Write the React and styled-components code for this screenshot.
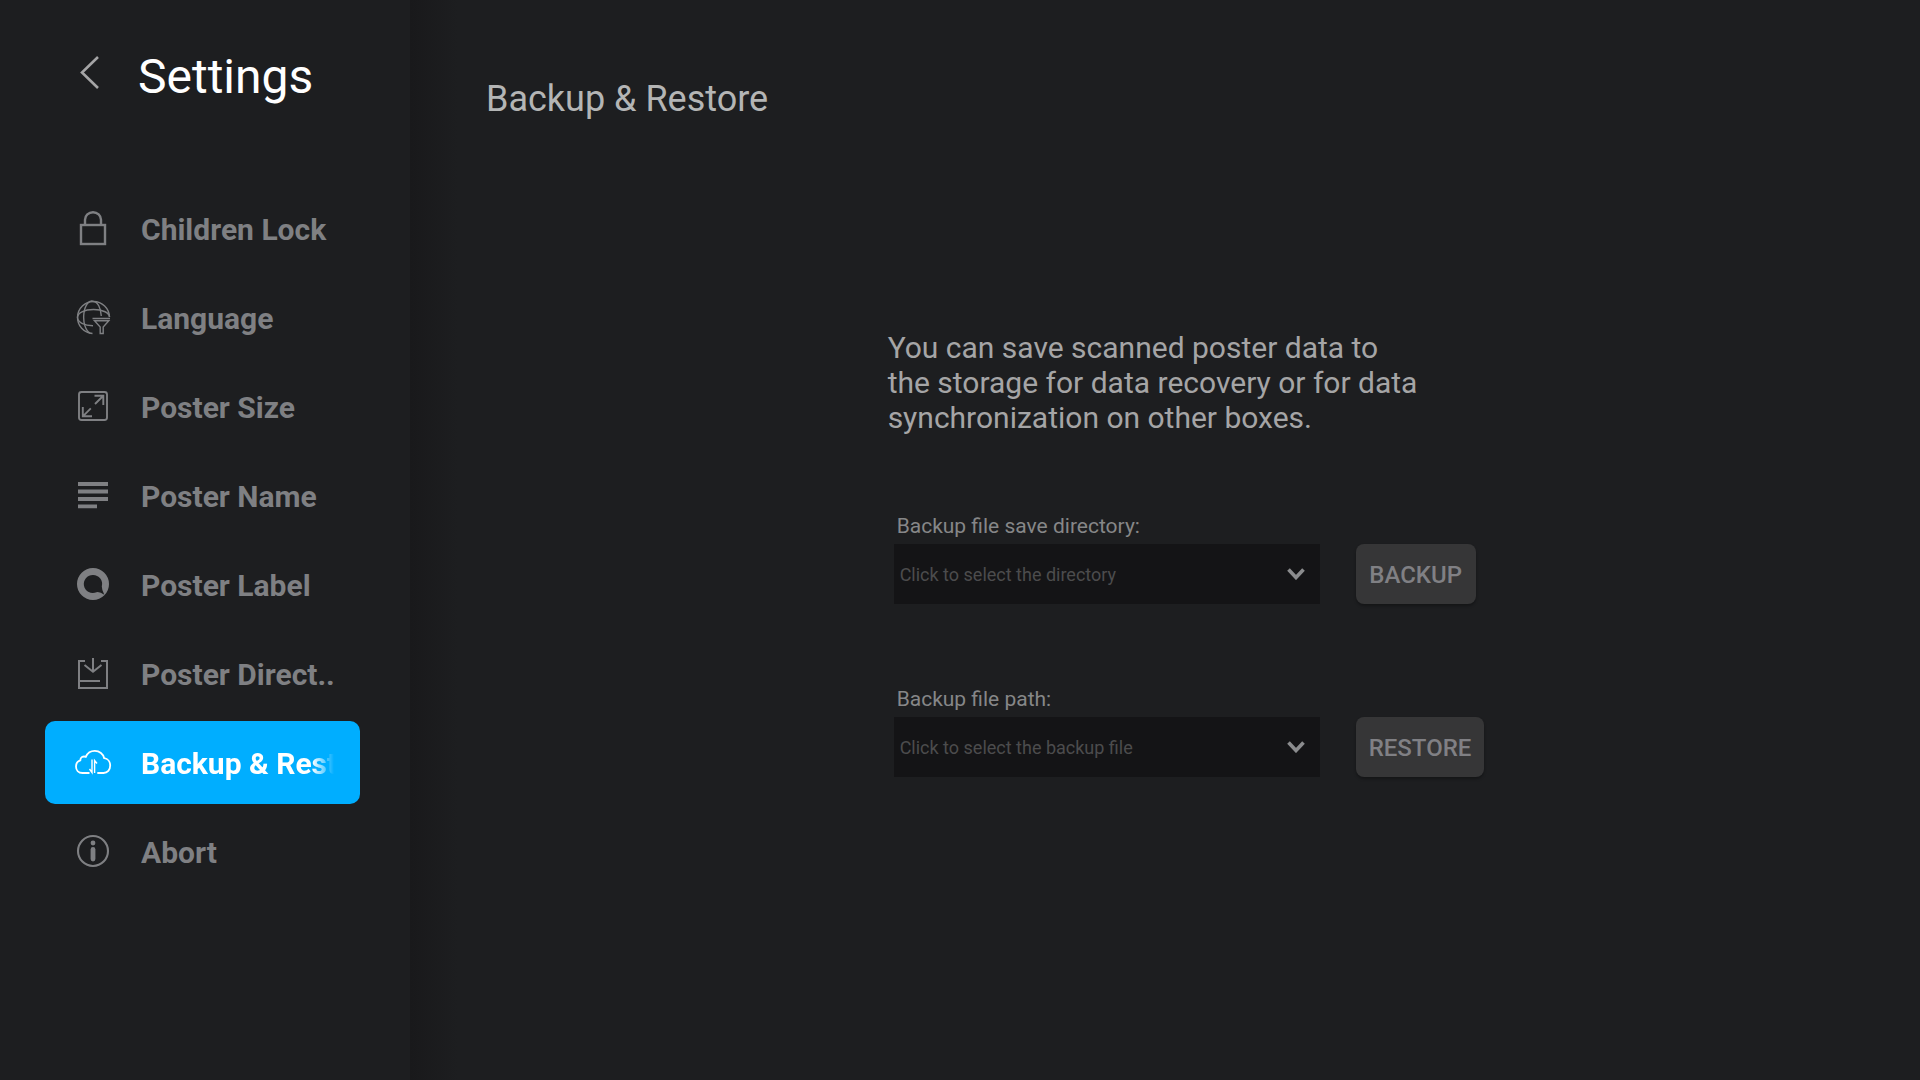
import React, { useState } from "react"
import styled, { createGlobalStyle, css } from "styled-components"

const LockIcon = () => (
  <Icon>
    <rect x="5" y="14" width="24" height="19" strokeWidth="2.4" />
    <path d="M9 14V8.8a8 7.6 0 0 1 16 0V14" strokeWidth="2.4" />
  </Icon>
)

const LanguageIcon = () => (
  <Icon strokeWidth="1.4">
    <path d="M16.5 33.5A16 16 0 1 1 33.5 17" />
    <path d="M14 33A8 16 0 0 1 17.5 1.5A8 16 0 0 1 25.3 16" />
    <path d="M17 25.7C8 25.7 1.5 22 1.5 17.5C1.5 13 8 9.5 17.5 9.5S33.5 13 33.5 17" />
    <path d="M16.5 18.5H34M18.5 20.8H32.8L27.2 27V33.5H24.2V27Z" />
  </Icon>
)

const SizeIcon = () => (
  <Icon strokeWidth="1.9">
    <rect x="3" y="3" width="28" height="28" rx="2.5" />
    <path d="M18.5 6.8H27.3V16M27.3 6.8L19 15" />
    <path d="M6.8 18V27.3H16M6.8 27.3L14.8 19.3" />
  </Icon>
)

const NameIcon = () => (
  <Icon>
    <path d="M2 6H32M2 13.5H32M2 21H32M2 28.3H21" strokeWidth="3.8" />
  </Icon>
)

const LabelIcon = () => (
  <Icon>
    <path
      d="M17 1A16 16 0 1 0 17 33A16 16 0 1 0 17 1ZM17 8A9 9 0 0 1 25.8 19.5Q25.8 23 28.3 27.8Q24 24.6 20.5 25.2A9 9 0 1 1 17 8Z"
      fill="currentColor"
      fillRule="evenodd"
      stroke="none"
    />
  </Icon>
)

const DirectoryIcon = () => (
  <Icon strokeWidth="2">
    <path d="M9 5H3V32H31V5H25" />
    <path d="M17 2V15.5M8.5 9L17 15.8L25.5 9M3 25H24" />
  </Icon>
)

const CloudIcon = () => (
  <Icon strokeWidth="1.8">
    <path d="M13.5 28H6.5C2.3 28 0 25 0 21.5C0 18.3 2 16 4.3 15.3C4.3 12.3 7 10.8 9.8 11.8C11.5 8 15 5.9 18.8 5.9C23.5 5.9 27.3 9 28.2 13.2C32 13.7 34.2 17 34.2 20.5C34.2 24.8 31.5 28 27.5 28H21.3" />
    <path d="M16 14.5V27.5L13.5 24M18.6 28V15.5L21 18.5" strokeWidth="1.4" />
  </Icon>
)

const InfoIcon = () => (
  <Icon>
    <circle cx="17" cy="17" r="15" strokeWidth="2.1" />
    <circle cx="17" cy="9" r="2.4" fill="currentColor" stroke="none" />
    <path d="M17 15.5V25" strokeWidth="4.8" strokeLinecap="round" />
  </Icon>
)

const menus = [
  { id: "lock", name: "Children Lock", icon: <LockIcon /> },
  { id: "language", name: "Language", icon: <LanguageIcon /> },
  { id: "size", name: "Poster Size", icon: <SizeIcon /> },
  { id: "name", name: "Poster Name", icon: <NameIcon /> },
  { id: "label", name: "Poster Label", icon: <LabelIcon /> },
  { id: "directory", name: "Poster Direct..", icon: <DirectoryIcon /> },
  { id: "backup", name: "Backup & Restore", icon: <CloudIcon /> },
  { id: "abort", name: "Abort", icon: <InfoIcon /> },
]

const Field = ({ id, label, placeholder, action }) => (
  <FieldView>
    <Label htmlFor={id}>{label}</Label>
    <FieldRow>
      <SelectView>
        <Select id={id} defaultValue="">
          <option value="">{placeholder}</option>
        </Select>
        <Chevron viewBox="0 0 18 12" aria-hidden="true">
          <path d="M1.5 1.5L9 9.5L16.5 1.5" />
        </Chevron>
      </SelectView>
      <ActionButton type="button">{action}</ActionButton>
    </FieldRow>
  </FieldView>
)

const App = () => {
  const [selected, setSelected] = useState("backup")

  return (
    <Container>
      <GlobalStyle />
      <Sidebar>
        <Header>
          <BackButton type="button" aria-label="Back">
            <BackArrow viewBox="0 0 20 40" aria-hidden="true">
              <path d="M18 1L2 16.5L18 32" />
            </BackArrow>
          </BackButton>
          <Title>Settings</Title>
        </Header>
        <Menu>
          {menus.map((menu) => (
            <MenuItem
              key={menu.id}
              type="button"
              $active={menu.id === selected}
              onClick={() => setSelected(menu.id)}
            >
              {menu.icon}
              <MenuText $active={menu.id === selected}>{menu.name}</MenuText>
            </MenuItem>
          ))}
        </Menu>
      </Sidebar>
      <Main>
        <PageTitle>Backup &amp; Restore</PageTitle>
        <Content>
          <Description>
            You can save scanned poster data to the storage for data recovery or for data
            synchronization on other boxes.
          </Description>
          <Field
            id="save-directory"
            label="Backup file save directory:"
            placeholder="Click to select the directory"
            action="BACKUP"
          />
          <Field
            id="backup-path"
            label="Backup file path:"
            placeholder="Click to select the backup file"
            action="RESTORE"
          />
        </Content>
      </Main>
    </Container>
  )
}

export default App

const GlobalStyle = createGlobalStyle`
  * {
    box-sizing: border-box;
  }
  body {
    margin: 0;
    background-color: #1d1e20;
    font-family: Roboto, "Liberation Sans", sans-serif;
  }
  button, select {
    font-family: inherit;
    border: none;
  }
  button {
    cursor: pointer;
  }
`
const Container = styled.div`
  display: grid;
  grid-template-columns: 410px 1fr;
  min-height: 100vh;
`
const Sidebar = styled.aside`
  padding: 44px 50px 44px 45px;
`
const Header = styled.header`
  display: flex;
  align-items: center;
  gap: 38px;
  height: 64px;
  margin-bottom: 79px;
  padding-left: 35px;
`
const BackButton = styled.button`
  display: flex;
  padding: 0;
  background: none;
  color: #a5a5a6;
`
const BackArrow = styled.svg`
  width: 20px;
  height: 40px;
  fill: none;
  stroke: currentColor;
  stroke-width: 2.6;
`
const Title = styled.h1`
  margin: 0;
  font-size: 48px;
  font-weight: 400;
  color: #ffffff;
`
const Menu = styled.nav`
  display: flex;
  flex-direction: column;
  gap: 6px;
`
const MenuItem = styled.button`
  display: flex;
  align-items: center;
  gap: 29px;
  height: 83px;
  padding: 0 24px 0 30px;
  border-radius: 10px;
  background-color: ${(props) => (props.$active ? "#00aeff" : "transparent")};
  color: ${(props) => (props.$active ? "#ffffff" : "#7f8083")};
`
const MenuText = styled.span`
  flex: 1;
  min-width: 0;
  padding-top: 2px;
  overflow: hidden;
  font-size: 30px;
  font-weight: 700;
  line-height: 36px;
  text-align: left;
  white-space: nowrap;
  ${(props) =>
    props.$active &&
    css`
      mask-image: linear-gradient(to left, transparent 2px, #000 24px);
    `}
`
const Icon = styled.svg.attrs({ viewBox: "-1 0 37 35", "aria-hidden": true })`
  flex: none;
  width: 37px;
  height: 35px;
  fill: none;
  stroke: currentColor;
`
const Main = styled.main`
  padding: 77px 0 44px 42px;
  background: linear-gradient(to right, #19191b, #1d1e20 48px);
`
const PageTitle = styled.h2`
  margin: 0;
  padding-left: 34px;
  font-size: 36px;
  font-weight: 400;
  line-height: 44px;
  color: #b4b5b5;
`
const Content = styled.section`
  display: flex;
  flex-direction: column;
  gap: 81px;
  width: fit-content;
  margin: 209px auto 0;
`
const Description = styled.p`
  max-width: 540px;
  margin: 0 0 -4px;
  font-size: 30px;
  line-height: 35px;
  color: #a5a5a6;
`
const FieldView = styled.div`
  padding-left: 6px;
`
const Label = styled.label`
  display: block;
  margin-bottom: 5px;
  padding: 2px 0 0 3px;
  font-size: 21px;
  line-height: 25px;
  color: #868788;
`
const FieldRow = styled.div`
  display: flex;
  gap: 36px;
`
const SelectView = styled.div`
  display: grid;
  width: 426px;
  align-items: center;
`
const Select = styled.select`
  grid-area: 1 / 1;
  height: 60px;
  padding: 0 48px 0 6px;
  appearance: none;
  border-radius: 0;
  background-color: #141416;
  font-size: 18px;
  color: #4c4c4d;
`
const Chevron = styled.svg`
  grid-area: 1 / 1;
  justify-self: end;
  width: 18px;
  height: 12px;
  margin-right: 15px;
  fill: none;
  stroke: #8b8c8e;
  stroke-width: 3.6;
  pointer-events: none;
`
const ActionButton = styled.button`
  min-width: 120px;
  height: 60px;
  padding: 2px 13px 0;
  border-radius: 8px;
  background-color: #363637;
  box-shadow: 0 2px 3px rgba(0, 0, 0, 0.3);
  font-size: 24px;
  font-weight: 500;
  color: #808084;
`
